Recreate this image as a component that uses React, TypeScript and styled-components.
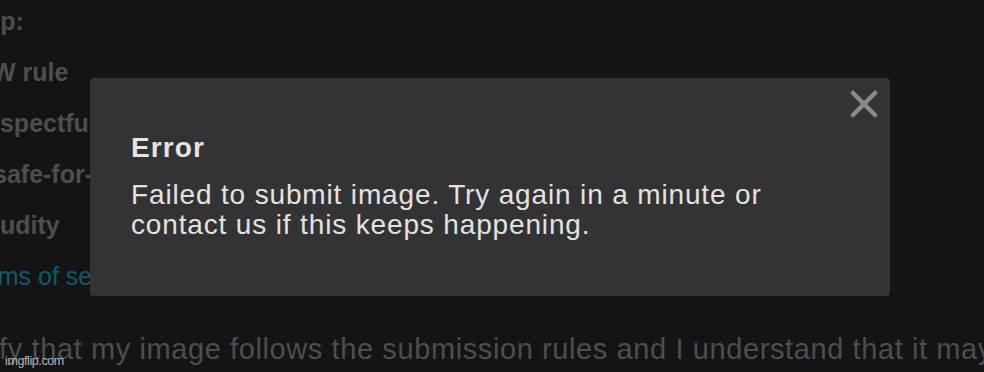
import React from "react";
import styled, { createGlobalStyle } from "styled-components";

const Global = createGlobalStyle`
  html, body { margin: 0; padding: 0; background: #141414; }
  body { width: 984px; height: 372px; overflow: hidden; font-family: "Liberation Sans", Arial, Helvetica, sans-serif; }
`;

const Page = styled.div`
  position: relative;
  width: 984px;
  height: 372px;
  overflow: hidden;
  background: #141414;
`;

const RuleList = styled.ul`
  list-style: none;
  margin: 0;
  padding: 0;
  display: flex;
  flex-direction: column;
`;

const Rule = styled.li<{ $shift: number; $link?: boolean }>`
  font-size: 25px;
  line-height: 51px;
  height: 51px;
  font-weight: ${(p) => (p.$link ? 400 : 700)};
  color: ${(p) => (p.$link ? "#0b5b6e" : "#4e4e4e")};
  margin-left: ${(p) => p.$shift}px;
  white-space: nowrap;
  &:first-child { margin-top: -4px; }
`;

const Certify = styled.p`
  margin: 31px 0 0 -76px;
  font-size: 29px;
  line-height: 32px;
  letter-spacing: 0.6px;
  color: #4e4e4e;
  white-space: nowrap;
`;

const Watermark = styled.span`
  position: absolute;
  left: 5px;
  bottom: 4px;
  font-size: 12.5px;
  line-height: 13px;
  letter-spacing: -0.4px;
  color: rgba(255, 255, 255, 0.7);
`;

const Modal = styled.div`
  position: absolute;
  left: 90px;
  top: 78px;
  width: 800px;
  height: 218px;
  box-sizing: border-box;
  background: #333333;
  border-radius: 4px;
  padding: 54px 40px 0 41px;
  color: #e0e0e0;
`;

const Title = styled.h2`
  margin: 0;
  font-size: 28px;
  font-weight: 700;
  line-height: 32px;
  letter-spacing: 1.1px;
  color: #e4e4e4;
`;

const Message = styled.p`
  margin: 16px 0 0 0;
  font-size: 28px;
  line-height: 30px;
  letter-spacing: 0.85px;
  color: #e2e2e2;
  max-width: 680px;
`;

const Close = styled.button`
  position: absolute;
  top: 10px;
  right: 10px;
  width: 32px;
  height: 32px;
  padding: 0;
  border: 0;
  background: transparent;
  display: flex;
  align-items: center;
  justify-content: center;
  cursor: pointer;
`;

export default function App() {
  return (
    <>
      <Global />
      <Page>
        <RuleList>
          <Rule $shift={-54}>Setup:</Rule>
          <Rule $shift={-58}>NSFW rule</Rule>
          <Rule $shift={-32}>Respectful</Rule>
          <Rule $shift={-7}>safe-for-work</Rule>
          <Rule $shift={-18}>Nudity</Rule>
          <Rule $shift={-37} $link>Terms of service</Rule>
        </RuleList>
        <Certify>I certify that my image follows the submission rules and I understand that it may be removed</Certify>
        <Watermark>imgflip.com</Watermark>
        <Modal role="dialog">
          <Close aria-label="Close">
            <svg width="28" height="28" viewBox="0 0 28 28">
              <path d="M3 3 L25 25 M25 3 L3 25" stroke="#8a8a8a" strokeWidth="4.5" strokeLinecap="round" />
            </svg>
          </Close>
          <Title>Error</Title>
          <Message>Failed to submit image. Try again in a minute or contact us if this keeps happening.</Message>
        </Modal>
      </Page>
    </>
  );
}
